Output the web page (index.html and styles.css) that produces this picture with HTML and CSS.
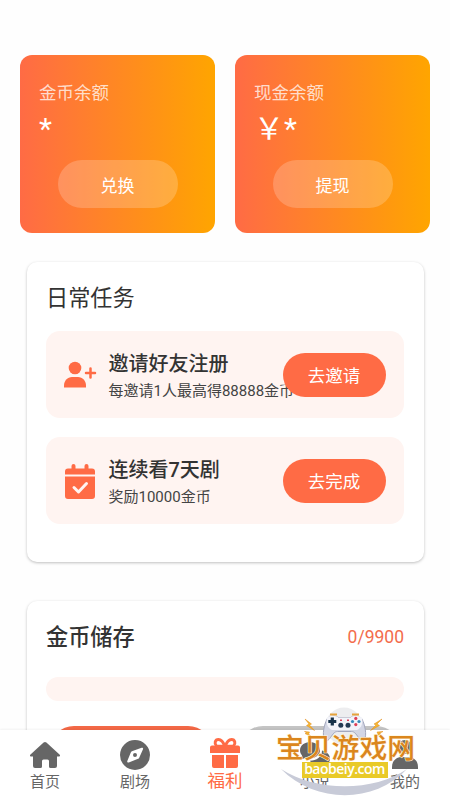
FILE: index.html
```html
<!DOCTYPE html>
<html lang="zh-CN">
<head>
<meta charset="utf-8">
<meta name="viewport" content="width=device-width, initial-scale=1">
<title>福利</title>
<link rel="stylesheet" href="styles.css">
</head>
<body>
<main class="page">
  <section class="balances">
    <div class="balance">
      <div class="balance-label">金币余额</div>
      <div class="balance-value">*</div>
      <button class="balance-button">兑换</button>
    </div>
    <div class="balance">
      <div class="balance-label">现金余额</div>
      <div class="balance-value">￥*</div>
      <button class="balance-button">提现</button>
    </div>
  </section>

  <section class="panel tasks">
    <h2 class="panel-title">日常任务</h2>
    <div class="task">
      <svg class="task-icon" viewBox="0 0 34 36"><circle cx="12" cy="11" r="6.300"/><path d="M1 30.500v-2C1 24 4.500 20 9 20h6c4.500 0 8 4 8 8.500v2z"/><path d="M27.500 11.500v9M23 16h9" class="plus"/></svg>
      <div class="task-text">
        <div class="task-name">邀请好友注册</div>
        <div class="task-note">每邀请1人最高得88888金币</div>
      </div>
      <button class="task-button">去邀请</button>
    </div>
    <div class="task">
      <svg class="task-icon" viewBox="0 0 34 36"><path d="M2 11.500V8.500a3 3 0 0 1 3-3h3.500V3a2 2 0 0 1 4 0v2.500h9V3a2 2 0 0 1 4 0v2.500H29a3 3 0 0 1 3 3v3zM2 13.500h30V33a3 3 0 0 1-3 3H5a3 3 0 0 1-3-3z"/><path d="m11 24.500 4.500 4.500 8-8.500" class="check"/></svg>
      <div class="task-text">
        <div class="task-name">连续看7天剧</div>
        <div class="task-note">奖励10000金币</div>
      </div>
      <button class="task-button">去完成</button>
    </div>
  </section>

  <section class="panel storage">
    <div class="storage-head">
      <h2 class="panel-title strong">金币储存</h2>
      <span class="storage-count">0/9900</span>
    </div>
    <div class="progress"></div>
    <div class="storage-actions">
      <div class="action"></div>
      <div class="action muted"></div>
    </div>
  </section>
</main>

<nav class="tabs">
  <a class="tab"><svg class="tab-icon" viewBox="0 0 32 32"><path d="M14.600 3.600a2 2 0 0 1 2.800 0L30.500 15.500c1 1 .4 2-.7 2H28V27a2 2 0 0 1-2 2h-4.500a1.500 1.500 0 0 1-1.500-1.500V22a1.500 1.500 0 0 0-1.500-1.500h-4A1.500 1.500 0 0 0 13 22v5.500a1.500 1.500 0 0 1-1.500 1.500H6a2 2 0 0 1-2-2v-9.500H2.200c-1.100 0-1.700-1-.7-2z"/></svg><span>首页</span></a>
  <a class="tab"><svg class="tab-icon" viewBox="0 0 32 32"><path fill-rule="evenodd" d="M16 1a15 15 0 1 1 0 30 15 15 0 0 1 0-30zm6.600 7.800-9.700 3.500a2 2 0 0 0-1.100 1.100l-3.500 8.600c-.4 1.100.5 1.900 1.500 1.500l9.300-3.700a2 2 0 0 0 1.100-1.100l3.800-8.500c.4-1-.4-1.800-1.400-1.400zM16 14a2 2 0 1 1 0 4 2 2 0 0 1 0-4z"/></svg><span>剧场</span></a>
  <a class="tab active"><svg class="tab-icon" viewBox="0 0 32 32"><path d="M1 10.500a2 2 0 0 1 2-2h26a2 2 0 0 1 2 2V16H1zM3 18h12v13H5a2 2 0 0 1-2-2zM17 18h12v11a2 2 0 0 1-2 2H17z"/><path class="bow" d="M16 9.500C14.500 5.500 12.500 2.500 9.500 2.500c-3.500 0-4.500 4-2 6.500zM16 9.500c1.500-4 3.500-7 6.500-7 3.500 0 4.500 4 2 6.500z"/></svg><span>福利</span></a>
  <a class="tab"><svg class="tab-icon" viewBox="0 0 32 32"><path d="M11 3c5.500 0 10 3.600 10 8.200s-4.500 8.200-10 8.200c-1.600 0-3-.3-4.300-.8C5.300 19.600 3 20.500 1 20.500c1.300-1.500 2-3 2-4.200-1.300-1.400-2-3.100-2-5.100C1 6.600 5.500 3 11 3z"/><path d="M23 11.500c4.500.8 8 4 8 8 0 2-.8 3.700-2 5 0 1.300.7 2.700 2 4.200-2 0-4.300-.8-5.700-1.900-6 2-12.300-.3-14.300-5 6.500 0 12-4 12-10.300z"/></svg><span>小说</span></a>
  <a class="tab"><svg class="tab-icon" viewBox="0 0 32 32"><circle cx="16" cy="8" r="7"/><path d="M3 30v-2c0-6 4-10 10-10h6c6 0 10 4 10 10v2z"/></svg><span>我的</span></a>
</nav>

<div class="watermark">
  <svg class="wm-art" viewBox="0 0 140 92">
    <circle cx="68" cy="20" r="18.500" fill="#ededef"/>
    <path d="M5 63C40 98 98 98 131 63 98 86 40 86 5 63z" fill="#c8cbd8"/>
    <path d="M51 13c-3 6-5 16-2.500 20.500 1.500 2.500 4 1 6-2 2.500-3.500 4-6 7-6h14c3 0 4.500 2.500 7 6 2 3 4.500 4.500 6 2C91 29 89 19 86 13c-1.500-3-9-4-12-1H63c-3-3-10.500-2-12 1z" fill="#d3d6e4" stroke="#a3a7bd"/>
    <path d="M51 12c3-3 9-3 12 0h11c3-3 9-3 12 0 1 4 0 10-5 12H56c-5-2-6-8-5-12z" fill="#f3f4fa"/>
    <path d="M54 8.500h7M76 8.500h7" stroke="#e6a33c" stroke-width="2"/>
    <path d="M56.300 11.500v8M52.300 15.500h8" stroke="#17324a" stroke-width="3.200"/>
    <circle cx="64.800" cy="19.300" r="2.500" fill="#253b55"/><circle cx="72" cy="19.300" r="2.500" fill="#253b55"/>
    <g fill="#de4058"><circle cx="79.800" cy="12.400" r="1.600"/><circle cx="79.800" cy="18.600" r="1.600"/><path d="M64 13.500h2V15h-2zM71 13.500h2V15h-2z"/></g>
    <g fill="#3589ba"><circle cx="76.500" cy="15.500" r="1.600"/><circle cx="83" cy="15.500" r="1.600"/></g>
    <g fill="#f6b72e" stroke="#e08b1d" stroke-width=".5"><path d="m29 13 6.500 5-2 1 5 5.500-8-5 2.500-1.500zM106 13l-8 5 2 1-5.500 5.500 9-5-2.500-1.500zM28.500 25.500l5 .5-1 2 3.500 3-7-3.500 2-.5zM107 25.500l-6 .5 1 2-4 3 7-3-2-.5z"/></g>
  </svg>
  <div class="wm-name">宝贝游戏网</div>
  <div class="wm-site">baobeiy.com</div>
</div>
</body>
</html>
```

FILE: styles.css
```css
* { box-sizing: border-box; }

body {
  margin: 0;
  width: 450px;
  height: 800px;
  overflow: hidden;
  position: relative;
  background: #fefefe;
  color: #333;
  font-family: Roboto, "Noto Sans CJK SC", sans-serif;
}

button {
  border: 0;
  padding: 0;
  font: inherit;
  color: #fff;
}

.page {
  height: 800px;
  padding-top: 55px;
  overflow: hidden;
}

.balances {
  display: flex;
  gap: 20px;
  padding: 0 20px;
}

.balance {
  display: flex;
  flex-direction: column;
  width: 195px;
  height: 178px;
  padding: 25px 19px 0;
  border-radius: 12px;
  background: linear-gradient(90deg, #ff6b45, #ffa500);
  color: #fff;
}

.balance-label {
  font-size: 17.5px;
  line-height: 26px;
  color: rgba(255, 255, 255, .75);
}

.balance-value {
  height: 54px;
  font-size: 30px;
  line-height: 46px;
}

.balance-button {
  align-self: center;
  width: 120px;
  height: 48px;
  border-radius: 24px;
  background: rgba(255, 255, 255, .2);
  font-size: 17px;
}

.panel {
  width: 397px;
  margin-left: 26.5px;
  padding: 0 19.5px;
  border-radius: 10px;
  background: #fff;
  box-shadow: 0 1px 3px rgba(0, 0, 0, .25);
}

.tasks {
  height: 300px;
  margin-top: 29px;
  padding-top: 19px;
}

.panel-title {
  margin: 0;
  font-size: 22.2px;
  line-height: 34px;
  font-weight: 400;
}

.strong { font-weight: 500; }

.task {
  display: flex;
  align-items: center;
  height: 87px;
  margin-top: 16px;
  padding: 0 18.5px 0 17px;
  border-radius: 14px;
  background: #fff4f1;
}

.task + .task { margin-top: 19px; }

.task-icon {
  flex: none;
  width: 34px;
  height: 36px;
  fill: #ff6b45;
}

.plus, .check {
  fill: none;
  stroke: #ff6b45;
  stroke-width: 2.5;
  stroke-linecap: round;
}

.check {
  stroke: #fff4f1;
  stroke-width: 3;
  stroke-linejoin: round;
}

.task-text {
  width: 174px;
  margin-left: 11.5px;
  padding-top: 4px;
  white-space: nowrap;
}

.task-name {
  font-size: 20px;
  line-height: 30px;
  font-weight: 500;
}

.task-note {
  font-size: 15px;
  line-height: 25px;
  color: #444;
}

.task-button {
  position: relative;
  flex: none;
  width: 103px;
  height: 44px;
  border-radius: 22px;
  background: #ff6b45;
  font-size: 17.5px;
}

.storage {
  height: 230px;
  margin-top: 39px;
  padding-top: 19px;
}

.storage-head {
  display: flex;
  align-items: center;
  justify-content: space-between;
}

.storage-count {
  color: #f36c4c;
  font-size: 17.5px;
}

.progress {
  height: 24px;
  margin-top: 22.5px;
  border-radius: 12px;
  background: #fff4f1;
}

.storage-actions {
  display: flex;
  gap: 27px;
  margin-top: 25.5px;
  padding: 0 4px;
}

.action {
  flex: 1;
  height: 48px;
  border-radius: 24px;
  background: #f36846;
}

.muted { background: #c4c4c4; }

.tabs {
  position: absolute;
  inset: 730px 0 0;
  display: flex;
  background: #fff;
  box-shadow: 0 -1px 2px rgba(0, 0, 0, .05);
}

.tab {
  display: flex;
  flex: 1;
  flex-direction: column;
  align-items: center;
  padding-top: 9px;
  font-size: 15px;
  line-height: 23px;
  color: #666;
}

.tab-icon {
  width: 32px;
  height: 32px;
  fill: #666;
}

.active {
  padding-top: 7px;
  font-size: 17.5px;
  line-height: 24px;
  color: #ff6b45;
}

.active .tab-icon { fill: #ff6b45; }

.bow {
  fill: none;
  stroke: #ff6b45;
  stroke-width: 3;
}

.watermark {
  position: absolute;
  left: 276px;
  top: 706px;
  width: 140px;
}

.wm-art {
  display: block;
  width: 140px;
  height: 92px;
  overflow: visible;
}

.wm-name {
  position: absolute;
  left: 0;
  top: 26px;
  font-size: 27.8px;
  line-height: 34px;
  font-weight: 500;
  white-space: nowrap;
  color: #db861d;
  -webkit-text-stroke: 1.2px #fff5d8;
  paint-order: stroke fill;
}

.wm-site {
  position: absolute;
  left: 25.5px;
  top: 56px;
  width: 86px;
  height: 16px;
  background: #e9ca28;
  color: #fff;
  font: 600 14px/14px "Open Sans", sans-serif;
  letter-spacing: -.5px;
  text-align: center;
}
```
